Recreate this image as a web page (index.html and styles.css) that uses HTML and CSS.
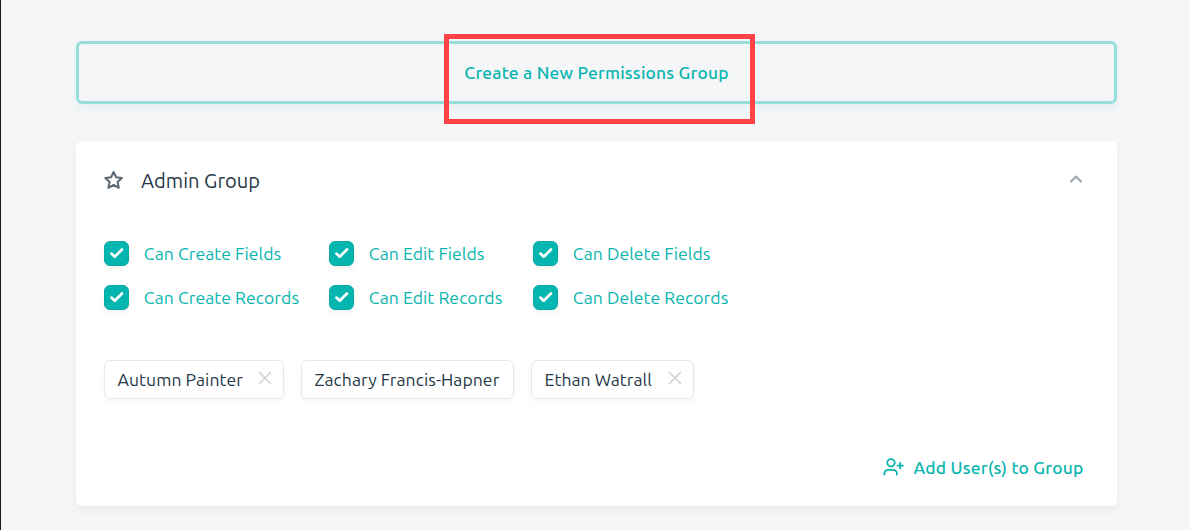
FILE: index.html
```html
<!DOCTYPE html>
<html lang="en">
<head>
<meta charset="utf-8">
<title>Permissions Groups</title>
<link rel="stylesheet" href="styles.css">
</head>
<body>
<svg class="sprite" aria-hidden="true">
  <symbol id="check" viewBox="0 0 23 23"><path d="M6.4 11.6l3.3 3.1 7.3-7.2" fill="none" stroke="#fff" stroke-width="2.7" stroke-linecap="round" stroke-linejoin="round"/></symbol>
  <symbol id="close" viewBox="0 0 14 14"><path d="M1.5 1.5l11 11M12.5 1.5l-11 11" fill="none" stroke="currentColor" stroke-width="1.7" stroke-linecap="round"/></symbol>
</svg>
<main class="page">
  <button class="create"><span>Create a New Permissions Group</span></button>
  <section class="card">
    <header class="card-header">
      <svg class="star" viewBox="0 0 20 20"><path d="M9.6 2l2.5 5.3 5.8.7-4.3 4 1.2 5.8-5.2-2.9-5.2 2.9L5.6 12 1.3 8l5.8-.7z" fill="none" stroke="currentColor" stroke-width="2" stroke-linejoin="round"/></svg>
      <h2 class="title">Admin Group</h2>
      <svg class="chevron" viewBox="0 0 14 10"><path d="M2 7.5l5-5 5 5" fill="none" stroke="currentColor" stroke-width="2.1" stroke-linecap="round" stroke-linejoin="round"/></svg>
    </header>
    <div class="permissions">
      <label class="permission"><svg class="box"><use href="#check"/></svg><span>Can Create Fields</span></label>
      <label class="permission"><svg class="box"><use href="#check"/></svg><span>Can Edit Fields</span></label>
      <label class="permission"><svg class="box"><use href="#check"/></svg><span>Can Delete Fields</span></label>
      <label class="permission"><svg class="box"><use href="#check"/></svg><span>Can Create Records</span></label>
      <label class="permission"><svg class="box"><use href="#check"/></svg><span>Can Edit Records</span></label>
      <label class="permission"><svg class="box"><use href="#check"/></svg><span>Can Delete Records</span></label>
    </div>
    <div class="members">
      <div class="chip chip-autumn"><span>Autumn Painter</span><svg class="close"><use href="#close"/></svg></div>
      <div class="chip chip-zachary"><span>Zachary Francis-Hapner</span></div>
      <div class="chip chip-ethan"><span>Ethan Watrall</span><svg class="close"><use href="#close"/></svg></div>
    </div>
    <footer class="card-footer">
      <button class="add">
        <svg class="user" viewBox="0 0 21 18"><g fill="none" stroke="currentColor" stroke-width="1.8" stroke-linecap="round"><circle cx="8" cy="4.8" r="3.7"/><path d="M1.3 16.5v-.7a4 4 0 0 1 4-4h4.6a4 4 0 0 1 4 4v.7M17.2 5v5.4M14.5 7.7h5.4"/></g></svg>
        <span>Add User(s) to Group</span>
      </button>
    </footer>
  </section>
</main>
<div class="highlight"></div>
</body>
</html>
```

FILE: styles.css
```css
* { box-sizing: border-box; }
body {
  margin: 0;
  height: 530px;
  overflow: hidden;
  background: #f4f6f8;
  border-left: 1px solid #17181c;
  font-family: Ubuntu, "Noto Sans", sans-serif;
  color: #263847;
}
button { font: inherit; border: 0; background: none; padding: 0; }
span { white-space: nowrap; }
.sprite { display: none; }
.page { width: 1041px; margin-left: 75px; padding-top: 41px; }
.create {
  display: flex;
  align-items: center;
  justify-content: center;
  width: 100%;
  height: 63px;
  border: 3px solid #95dedb;
  border-radius: 6px;
  color: #08b5ae;
  font-size: 17.4px;
  letter-spacing: .19px;
  font-weight: 500;
  box-shadow: 0 4px 8px rgba(8, 120, 100, .05);
}
.card {
  height: 365px;
  margin-top: 37px;
  padding: 27px 28px 0;
  border-radius: 6px;
  background: #fff;
  box-shadow: 0 4px 10px rgba(30, 45, 60, .05);
}
.card-header { display: flex; align-items: center; height: 24px; }
.star { width: 20px; height: 20px; color: #5c6873; }
.title { margin: 0 0 0 17px; font-size: 20.1px; font-weight: 400; }
.chevron { width: 14px; height: 10px; margin: 0 6px 3px auto; color: #a0a8ad; }
.permissions {
  display: grid;
  grid-template-columns: 225px 204px 220px;
  row-gap: 19px;
  margin-top: 49px;
}
.permission { display: flex; align-items: center; gap: 14.8px; height: 25px; color: #08b5ae; font-size: 17.6px; letter-spacing: .05px; }
.box { width: 25px; height: 25px; border: 1px solid #08aaa4; border-radius: 6px; background: #05b6b0; box-shadow: 0 4px 6px rgba(0, 0, 0, .04); }
.members { display: flex; gap: 17px; margin-top: 50px; }
.chip {
  display: flex;
  align-items: center;
  height: 39px;
  padding: 0 11.5px 0 12.5px;
  border: 1px solid #e5e7e9;
  border-radius: 6px;
  font-size: 17.6px;
  letter-spacing: .05px;
  box-shadow: 0 4px 6px rgba(0, 0, 0, .03);
}
.chip-autumn { width: 180px; }
.chip-zachary { width: 213px; }
.chip-ethan { width: 163px; }
.close { width: 14px; height: 14px; margin: 0 0 3px auto; color: #d1d4d7; }
.card-footer { display: flex; justify-content: flex-end; margin-top: 56px; padding-right: 5.6px; }
.add { display: flex; align-items: center; height: 24px; gap: 10px; color: #08b5ae; font-size: 17.4px; letter-spacing: .19px; font-weight: 500; }
.user { width: 21px; height: 18px; }
.highlight { position: absolute; left: 444px; top: 34px; width: 311px; height: 90px; border: 5px solid #ff4245; }
```
